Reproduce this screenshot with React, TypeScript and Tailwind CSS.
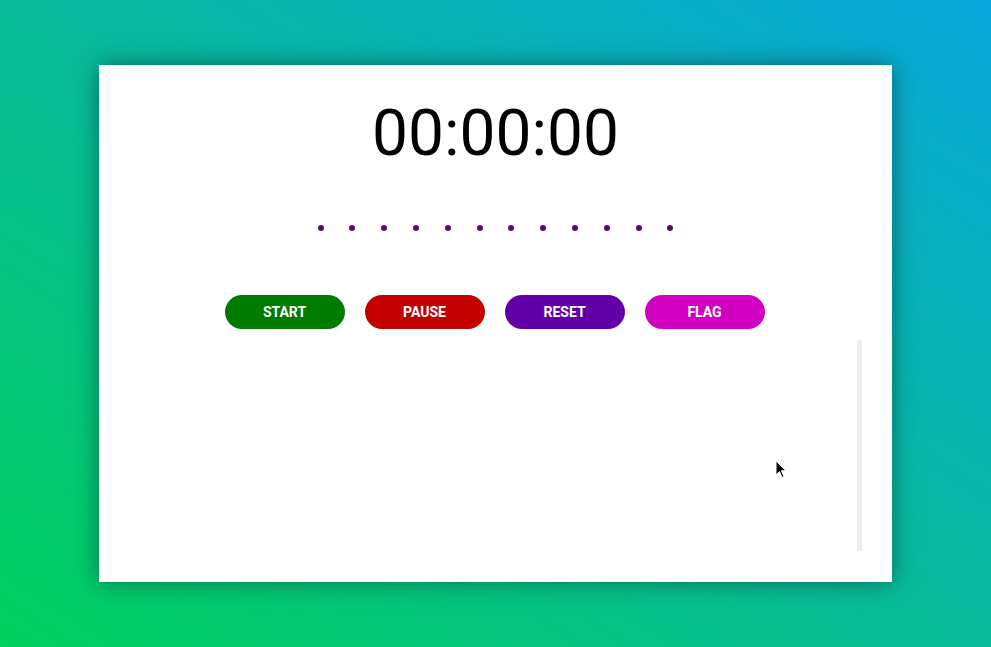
import { useState } from 'react';

const buttons = [
  { label: 'START', cls: 'bg-[#007a00]' },
  { label: 'PAUSE', cls: 'bg-[#c20000]' },
  { label: 'RESET', cls: 'bg-[#6200a8]' },
  { label: 'FLAG', cls: 'bg-[#d200c0]' },
];

function App() {
  const [time] = useState('00:00:00');
  const dots = Array.from({ length: 12 });

  return (
    <div className="min-h-screen w-full flex items-center justify-center bg-[linear-gradient(to_top_right,#00d05e,#08bb9a,#08a8dc)] font-['Roboto',sans-serif]">
      <div className="relative w-[793px] h-[517px] bg-white shadow-[0_0_22px_rgba(0,40,40,0.55)] flex flex-col items-center pt-[36px] pb-[30px]">
        {/* timer */}
        <div className="text-[64px] leading-[66px] font-normal text-black">{time}</div>

        {/* progress dots */}
        <div className="mt-[58px] flex gap-[25.8px]">
          {dots.map((_, i) => (
            <span key={i} className="w-[6px] h-[6px] rounded-full bg-[#5a0a6e]" />
          ))}
        </div>

        {/* controls */}
        <div className="mt-[64px] flex gap-[20px] -translate-x-[1px]">
          {buttons.map((b) => (
            <button
              key={b.label}
              className={`${b.cls} w-[120px] h-[34px] rounded-full text-white text-[14px] font-bold flex items-center justify-center`}
            >
              {b.label}
            </button>
          ))}
        </div>

        {/* laps list */}
        <div className="mt-[11px] w-full flex-1 flex justify-end pr-[30px]">
          <div className="w-[5px] h-[211px] bg-[#efefef]" />
        </div>

        {/* cursor */}
        <svg className="absolute left-[676px] top-[395px]" width="12" height="20" viewBox="0 0 12 20">
          <path d="M1 1 L1 15 L4.5 11.5 L7 17.5 L9 16.5 L6.5 10.8 L11 10.8 Z" fill="#000" stroke="#fff" strokeWidth="1" />
        </svg>
      </div>
    </div>
  );
}

export default App;
